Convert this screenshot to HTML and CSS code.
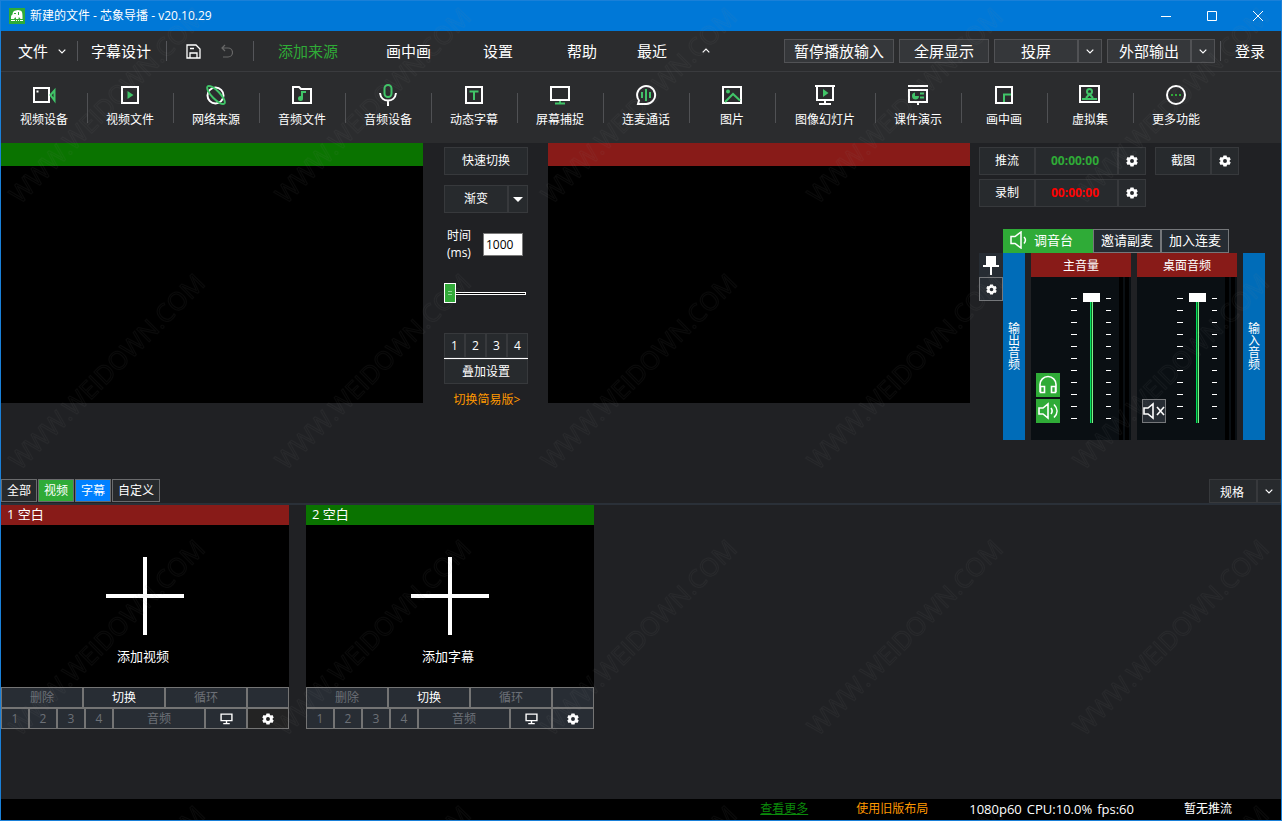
FILE: index.html
```html
<!DOCTYPE html>
<html lang="zh-CN">
<head>
<meta charset="utf-8">
<title>新建的文件 - 芯象导播</title>
<link rel="stylesheet" href="styles.css">
</head>
<body>
<svg class="defs" aria-hidden="true">
  <symbol id="cog" viewBox="0 0 14 14"><path fill="currentColor" fill-rule="evenodd" d="M5.200.500h3.600l.5 1.800 1.100.6 1.800-.5 1.500 2.900-1.300 1.200v1l1.300 1.200-1.500 2.900-1.800-.5-1.100.6-.5 1.800H5.200l-.5-1.800-1.100-.6-1.800.5L.3 8.700l1.300-1.200v-1L.3 5.300l1.500-2.900 1.800.5 1.100-.6zM7 4.700a2.300 2.300 0 1 0 0 4.600 2.300 2.300 0 0 0 0-4.600z"/></symbol>
  <symbol id="down" viewBox="0 0 8 5"><path d="M.7.7 4 4 7.300.7" fill="none" stroke="currentColor" stroke-width="1.200"/></symbol>
  <symbol id="screen" viewBox="0 0 12 12"><path d="M1 2h10v6H1zM6 8v3M3 10.700h6" fill="none" stroke="currentColor" stroke-width="1.300"/></symbol>
</svg>
<div class="window">
  <header class="titlebar">
    <svg class="logo" viewBox="0 0 16 16" aria-hidden="true"><rect width="16" height="16" fill="#2fab37"/><path fill="#fff" d="M2 9c0-1 .5-2 1.500-2.500C3.500 4 5 2.500 7 2.500c1-.7 3-.7 4 0 2 .5 2.500 2 2.500 6V11h-2l-1-1.500h-1V11H7V9.500H6L5 11H2z"/><path fill="#2fab37" d="M5 5h2v1H5zM9 4h1v3H9z"/><path stroke="#fff" d="M2 12.500h4M7 12.500h1M9 12.500h1M11 12.500h3"/></svg>
    <span class="title">新建的文件 - 芯象导播 - v20.10.29</span>
    <div class="winbtns">
      <button aria-label="最小化"><svg width="10" height="10"><path d="M0 5.500h10" stroke="#fff"/></svg></button>
      <button aria-label="最大化"><svg width="10" height="10"><path d="M.5.5h9v9h-9z" stroke="#fff" fill="none"/></svg></button>
      <button aria-label="关闭"><svg width="10" height="10"><path d="m0 0 10 10M10 0 0 10" stroke="#fff"/></svg></button>
    </div>
  </header>

  <nav class="menubar">
    <button class="menu file">文件<svg class="chev"><use href="#down"/></svg></button>
    <span class="vsep"></span>
    <button class="menu design">字幕设计</button>
    <span class="vsep"></span>
    <button class="menu save" aria-label="保存"><svg width="15" height="15"><path d="M1 1h9l4 4v9H1zM4 14V9h7v5M4 4.500h4" fill="none" stroke="#fff" stroke-width="1.300"/></svg></button>
    <button class="menu undo" aria-label="撤销"><svg width="12" height="14"><path d="M4 1 1 4l3 3M1 4h6a4.500 4.500 0 0 1 0 9H2" fill="none" stroke="#686868" stroke-width="1.200"/></svg></button>
    <span class="vsep"></span>
    <div class="tabs">
      <button class="tab on">添加来源</button>
      <button class="tab pip">画中画</button>
      <button class="tab">设置</button>
      <button class="tab help">帮助</button>
      <button class="tab recent">最近</button>
      <button class="tab fold" aria-label="收起"><svg class="chev up"><use href="#down"/></svg></button>
    </div>
    <div class="outputs">
      <button class="obtn w110">暂停播放输入</button>
      <button class="obtn w90">全屏显示</button>
      <div class="split"><button class="obtn w84">投屏</button><button class="obtn w24" aria-label="投屏选项"><svg class="chev"><use href="#down"/></svg></button></div>
      <div class="split"><button class="obtn w84">外部输出</button><button class="obtn w24" aria-label="输出选项"><svg class="chev"><use href="#down"/></svg></button></div>
      <span class="vsep"></span>
      <button class="menu login">登录</button>
    </div>
  </nav>

  <div class="toolbar">
    <button class="tool"><svg viewBox="0 0 24 22"><path class="w" d="M2 4h15v14H2z"/><path d="M4.500 6.500h2v2h-2z" fill="#fff"/><path class="g" d="m18.500 11 4-4.500v10z"/></svg>视频设备</button>
    <button class="tool"><svg viewBox="0 0 24 22"><path class="w" d="M4 3h16v16H4z"/><path class="gf" d="m9.500 7 6 4-6 4z"/></svg>视频文件</button>
    <button class="tool"><svg viewBox="0 0 24 22"><circle class="w" cx="11.500" cy="11.500" r="8"/><ellipse class="g" cx="12" cy="11" rx="12" ry="4" transform="rotate(46 12 11)"/></svg>网络来源</button>
    <button class="tool"><svg viewBox="0 0 24 22"><path class="w" d="M3 3h6l2 2h10v14H3z"/><path class="g" d="M12 14.500V8h4"/><circle class="gf" cx="10.500" cy="14.500" r="2.500"/></svg>音频文件</button>
    <button class="tool"><svg viewBox="0 0 24 22"><rect class="g" x="8.500" y="1" width="7" height="12" rx="3.500"/><path class="w" d="M4 9c1 10 15 10 16 0M12 16.500V22"/></svg>音频设备</button>
    <button class="tool"><svg viewBox="0 0 24 22"><path class="w" d="M4 3h16v16H4z"/><path class="g" d="M7.500 7.500h9M12 7.500V16"/></svg>动态字幕</button>
    <button class="tool"><svg viewBox="0 0 24 22"><path class="w" d="M3 3h18v13H3z"/><path class="g" d="M12 17v2.500M7 19.500h10"/></svg>屏幕捕捉</button>
    <button class="tool"><svg viewBox="0 0 24 22"><path class="w" d="M4 20h8a9 9 0 1 0-7-3.500z"/><path class="g" d="M8 8v6M12 5v12M16 8v6"/></svg>连麦通话</button>
    <button class="tool"><svg viewBox="0 0 24 22"><path class="w" d="M3 3h18v16H3z"/><path class="g" d="m5 18 8-8 7 6.500"/><circle class="gf" cx="8" cy="7.500" r="2"/></svg>图片</button>
    <button class="tool wide"><svg viewBox="0 0 24 22"><path class="w" d="M2 2h20M4 2v14h16V2M12 16v4M6 20h12"/><path class="gf" d="m10 5 5.500 4-5.500 4z"/></svg>图像幻灯片</button>
    <button class="tool"><svg viewBox="0 0 24 22"><path class="w" d="M2 2h20M3 6h18v12H3zM12 18v3"/><path class="gf" d="M9 8.500V12h4a3.500 3.500 0 1 1-4-3.500z"/><path class="g" d="M14 9.500h4M14 13.500h4"/></svg>课件演示</button>
    <button class="tool"><svg viewBox="0 0 24 22"><path class="w" d="M4 3h16v16H4z"/><path class="g" d="M12 18v-7.500h7"/></svg>画中画</button>
    <button class="tool"><svg viewBox="0 0 24 22"><path class="w" d="M2 2h19v16H2z"/><circle class="g" cx="11.500" cy="7.500" r="2.500"/><path class="g" d="m8 14 3.500-4 3.500 4M4 15h15"/></svg>虚拟集</button>
    <button class="tool"><svg viewBox="0 0 24 22"><circle class="w" cx="12" cy="11" r="9"/><path d="M7 10h2v2H7zM11 10h2v2h-2zM15 10h2v2h-2z" fill="#2fab37"/></svg>更多功能</button>
  </div>

  <main class="stage">
    <section class="monitor" aria-label="预览"><div class="bar green"></div><div class="screen"></div></section>
    <section class="mix">
      <button class="btn">快速切换</button>
      <div class="split fade"><button class="btn grow">渐变</button><button class="btn drop" aria-label="转场列表"><svg width="10" height="5"><path d="M0 0h10L5 5z" fill="#fff"/></svg></button></div>
      <div class="time"><label for="ms">时间<br>(ms)</label><input id="ms" type="text" value="1000"></div>
      <input class="fader" type="range" value="0" aria-label="转场进度">
      <div class="nums"><button class="btn">1</button><button class="btn">2</button><button class="btn">3</button><button class="btn">4</button></div>
      <button class="btn overlay">叠加设置</button>
      <a class="simple" href="#">切换简易版&gt;</a>
    </section>
    <section class="monitor" aria-label="输出"><div class="bar red"></div><div class="screen"></div></section>
    <aside class="side">
      <div class="recrow">
        <div class="split"><button class="btn w56">推流</button><output class="btn clock live">00:00:00</output><button class="btn w28" aria-label="推流设置"><svg class="cog"><use href="#cog"/></svg></button></div>
        <div class="split"><button class="btn w56">截图</button><button class="btn w28" aria-label="截图设置"><svg class="cog"><use href="#cog"/></svg></button></div>
      </div>
      <div class="recrow">
        <div class="split"><button class="btn w56">录制</button><output class="btn clock rec">00:00:00</output><button class="btn w28" aria-label="录制设置"><svg class="cog"><use href="#cog"/></svg></button></div>
      </div>
      <div class="mixer">
        <div class="mixtabs">
          <button class="console"><svg width="18" height="18"><path d="M1 5.500h4L11 1v16l-6-4.500H1zM14 6c2 2 2 4 0 6.500" fill="none" stroke="#fff" stroke-width="1.500"/></svg>调音台</button>
          <button class="mt">邀请副麦</button><button class="mt">加入连麦</button>
        </div>
        <div class="pins">
          <button class="pin" aria-label="固定"><svg width="16" height="19"><path d="M3 0h10v9h3v2H9v8H7v-8H0V9h3z" fill="#fff"/></svg></button>
          <button class="pin boxed" aria-label="设置"><svg class="cog small"><use href="#cog"/></svg></button>
        </div>
        <div class="channels">
          <div class="vlabel"><span>输出音频</span></div>
          <div class="strip">
            <div class="sname">主音量</div>
            <div class="sbody">
              <div class="sbtns">
                <button class="sb" aria-label="监听"><svg width="20" height="20"><path d="M2 17V9.500a8 8 0 0 1 16 0V17M2.500 11.500h4v6h-4zM13.500 11.500h4v6h-4z" fill="none" stroke="#fff" stroke-width="1.600"/></svg></button>
                <button class="sb" aria-label="静音"><svg width="20" height="18"><path d="M1 6h4l5-4v14l-5-4H1zM13 6c1.500 2 1.500 4 0 6M16 2.500c4 4 4 9 0 13" fill="none" stroke="#fff" stroke-width="1.600"/></svg></button>
              </div>
              <span class="ticks"></span><input class="vol" type="range" value="100" aria-label="主音量"><span class="ticks short"></span>
              <span class="meter"></span>
            </div>
          </div>
          <div class="strip">
            <div class="sname">桌面音频</div>
            <div class="sbody">
              <div class="sbtns">
                <button class="sb off" aria-label="取消静音"><svg width="22" height="18"><path d="M1 6h4l5-4v14l-5-4H1zM14 5l7 8M21 5l-7 8" fill="none" stroke="#fff" stroke-width="1.600"/></svg></button>
              </div>
              <span class="ticks"></span><input class="vol" type="range" value="100" aria-label="桌面音频"><span class="ticks short"></span>
              <span class="meter"></span>
            </div>
          </div>
          <div class="vlabel"><span>输入音频</span></div>
        </div>
      </div>
    </aside>
  </main>

  <div class="filter">
    <button class="cat">全部</button><button class="cat c-green">视频</button><button class="cat c-blue">字幕</button><button class="cat">自定义</button>
    <div class="split spec"><button class="btn w48">规格</button><button class="btn w24" aria-label="规格选项"><svg class="chev"><use href="#down"/></svg></button></div>
  </div>

  <section class="sources">
    <article class="card">
      <h2 class="chead red">1 空白</h2>
      <button class="add"><svg class="plus" viewBox="0 0 78 78"><path d="M37 0h4v78h-4zM0 37h78v4H0z" fill="#fff"/></svg><span class="addname">添加视频</span></button>
      <div class="r1"><button disabled>删除</button><button>切换</button><button disabled>循环</button><button aria-label="空"></button></div>
      <div class="r2"><button disabled>1</button><button disabled>2</button><button disabled>3</button><button disabled>4</button><button disabled>音频</button><button aria-label="投屏"><svg class="scr"><use href="#screen"/></svg></button><button class="set" aria-label="设置"><svg class="cog"><use href="#cog"/></svg></button></div>
    </article>
    <article class="card">
      <h2 class="chead green">2 空白</h2>
      <button class="add"><svg class="plus" viewBox="0 0 78 78"><path d="M37 0h4v78h-4zM0 37h78v4H0z" fill="#fff"/></svg><span class="addname">添加字幕</span></button>
      <div class="r1"><button disabled>删除</button><button>切换</button><button disabled>循环</button><button aria-label="空"></button></div>
      <div class="r2"><button disabled>1</button><button disabled>2</button><button disabled>3</button><button disabled>4</button><button disabled>音频</button><button aria-label="投屏"><svg class="scr"><use href="#screen"/></svg></button><button aria-label="设置"><svg class="cog"><use href="#cog"/></svg></button></div>
    </article>
  </section>

  <footer class="status">
    <a class="more" href="#">查看更多</a>
    <a class="old" href="#">使用旧版布局</a>
    <div class="stats"><span>1080p60</span><span>CPU:10.0%</span><span>fps:60</span></div>
    <span class="push">暂无推流</span>
  </footer>
</div>
<svg class="watermark" aria-hidden="true">
  <defs><pattern id="wm" x="0" y="-60" width="266" height="266" patternUnits="userSpaceOnUse"><text class="wmtext" transform="translate(20 265) rotate(-45)">WWW.WEIDOWN.COM</text></pattern></defs>
  <rect width="100%" height="100%" fill="url(#wm)"/>
</svg>
</body>
</html>
```

FILE: styles.css
```css
* { box-sizing: border-box; }
body {
  margin: 0;
  position: relative;
  background: #202124;
  color: #fff;
  font: 12px/16px "Open Sans", "Noto Sans CJK SC", sans-serif;
}
button, input, output { font: inherit; color: inherit; }
button { padding: 0; margin: 0; border: 0; background: none; white-space: nowrap; }
a { color: inherit; text-decoration: none; }
svg { display: block; flex: none; }
.defs { position: absolute; width: 0; height: 0; }
.window { display: flex; flex-direction: column; min-height: 100vh; border: 1px solid #1a80d8; }
.split { display: flex; }

.titlebar { display: flex; align-items: center; height: 30px; padding-left: 8px; background: #0078d7; }
.logo { width: 16px; height: 16px; }
.title { margin-left: 5px; }
.winbtns { display: flex; margin-left: auto; align-self: stretch; }
.winbtns button { width: 46px; display: grid; place-items: center; }

.menubar { display: flex; align-items: center; height: 41px; background: #2b2c2e; border-bottom: 1px solid #3a3b3e; font-size: 15px; line-height: 20px; }
.vsep { width: 1px; height: 20px; background: #55565a; flex: none; }
.chev { width: 8px; height: 5px; }
.up { transform: rotate(180deg); }
.menu { display: flex; align-items: center; }
.file { padding: 0 11px 0 17px; gap: 10px; }
.design { padding: 0 15px 0 13px; }
.save { padding: 0 10px 0 19px; }
.undo { padding: 0 20px 0 10px; }
.tabs { display: flex; align-self: stretch; margin-left: 13px; }
.tab { padding: 0 26px 2px; height: 42px; }
.tab.on { padding: 0 13px 1px 11px; color: #2fab37; border-bottom: 1px solid #2fab37; }
.tab.pip { margin-left: 9px; }
.tab.help { padding: 0 24px 2px 28px; }
.tab.recent { padding: 0 16px 2px; }
.tab.fold { padding: 0 19px 4px; }
.outputs { display: flex; align-items: center; gap: 5px; margin-left: auto; }
.obtn { display: grid; place-items: center; height: 24px; background: #35373a; border: 1px solid #515255; }
.w110 { width: 110px; }
.w90 { width: 90px; }
.w84 { width: 84px; }
.w56 { width: 56px; }
.w48 { width: 48px; }
.w28 { width: 28px; }
.w24 { width: 24px; }
.login { padding: 0 16px 0 9px; }

.toolbar { display: flex; height: 71px; background: #2b2c2e; }
.tool { display: flex; flex-direction: column; align-items: center; gap: 6px; min-width: 86px; padding: 12px 18px 0; }
.tool.wide { padding: 12px 20px 0; }
.tool + .tool { background: linear-gradient(#505154, #505154) 0 21px / 1px 30px no-repeat; }
.tool svg { width: 24px; height: 22px; }
.w { fill: none; stroke: #fff; stroke-width: 2; }
.g { fill: none; stroke: #41c468; stroke-width: 2; }
.gf { fill: #41c468; }

.stage { display: grid; grid-template-columns: 1fr 125px 1fr 311px; align-items: start; padding-bottom: 39px; }
.bar { height: 23px; }
.green { background: #0a7300; }
.red { background: #881b18; }
.screen { aspect-ratio: 16 / 9; background: #000; }
.btn { display: grid; place-items: center; height: 28px; background: #272a2d; border: 1px solid #37393c; }
.mix { display: flex; flex-direction: column; width: 84px; margin: 4px 0 0 21px; }
.fade { margin-top: 10px; }
.grow { flex: 1; }
.drop { width: 20px; }
.time { display: flex; align-items: center; justify-content: space-between; margin-top: 14px; padding: 0 5px 0 3px; line-height: 17px; }
.time input { width: 40px; height: 23px; padding: 0 2px; background: #fff; border: 1px solid #7a7a7a; color: #000; }
.fader { appearance: none; width: 84px; height: 20px; margin: 22px 0 30px; background: linear-gradient(#000, #000) 1px 10px / 80px 1px no-repeat, linear-gradient(#fff, #fff) 0 9px / 82px 3px no-repeat; }
.fader::-webkit-slider-thumb { appearance: none; width: 12px; height: 20px; border: 1px solid #fff; background: linear-gradient(#8fd894, #8fd894) 3px 7px / 4px 1px no-repeat, linear-gradient(#8fd894, #8fd894) 3px 10px / 4px 1px no-repeat, #2fab37; }
.nums { display: grid; grid-template-columns: repeat(4, 1fr); border-bottom: 1px solid #fff; }
.nums .btn, .overlay { height: 25px; }
.simple { margin: 8px 0 0 2px; text-align: center; color: #ff9800; }

.side { padding: 4px 0 0 9px; }
.recrow { display: flex; gap: 9px; margin-bottom: 4px; }
.clock { width: 83px; padding-right: 3px; font-weight: 700; }
.live { color: #2fab37; }
.rec { color: #f00; }
.cog { width: 12px; height: 12px; }
.cog.small { width: 11px; height: 11px; }
.mixer { display: grid; grid-template-columns: 24px 1fr; margin-top: 22px; }
.mixtabs { grid-column: 2; display: flex; height: 24px; font-size: 13px; }
.mixtabs button { padding-bottom: 2px; }
.console { display: flex; align-items: center; gap: 6px; width: 90px; padding-left: 7px; background: #2fab37; }
.mt { width: 68px; background: #262c33; border: 1px solid #75777a; }
.pins { grid-column: 1; }
.pin { display: grid; place-items: center; width: 24px; height: 24px; background: #262c33; }
.boxed { border: 1px solid #75777a; }
.channels { display: flex; gap: 6px; }
.vlabel { width: 22px; background: #006cb8; display: flex; align-items: center; justify-content: center; }
.vlabel span { width: 12px; line-height: 12px; text-align: center; }
.strip { width: 100px; background: #0a0f13; }
.sname { height: 24px; line-height: 25px; text-align: center; background: #881b18; }
.sbody { display: flex; height: 163px; padding: 16px 2px 17px 5px; }
.sbtns { display: flex; flex-direction: column; justify-content: flex-end; gap: 2px; width: 24px; margin-right: 11px; }
.sb { display: grid; place-items: center; width: 24px; height: 24px; background: #2fab37; }
.sb.off { background: #262c33; border: 1px solid #75777a; }
.ticks { width: 6px; height: 121px; margin: 5px 6px 0 0; background: repeating-linear-gradient(#fff 0 1px, transparent 1px 12px); }
.ticks.short { width: 5px; margin: 5px 8px 0 6px; }
.vol { appearance: none; writing-mode: vertical-lr; direction: rtl; width: 17px; height: 130px; margin: 0; background: linear-gradient(90deg, #00e060 1px, #086b25 1px 2px, #7ef08a 2px) 7px 0 / 3px 130px no-repeat; }
.vol::-webkit-slider-thumb { appearance: none; width: 17px; height: 9px; background: #fff; }
.meter { width: 10px; margin: -16px 0 -17px; background: linear-gradient(90deg, #000 4px, transparent 4px 6px, #000 6px 10px); }

.filter { display: flex; gap: 1px; height: 26px; border-bottom: 2px solid #2a3038; }
.cat { height: 23px; padding: 0 5px; background: #272a2d; border: 1px solid #6a6b6d; }
.c-green { background: #2fab37; }
.c-blue { background: #0080ff; }
.spec { margin-left: auto; }
.spec .btn { height: 24px; }
.spec .w48 { padding: 3px 2px 0 0; }

.sources { flex: 1; display: flex; flex-wrap: wrap; align-items: flex-start; gap: 17px; }
.card { width: 288px; }
.chead { margin: 0; padding: 0 6px 2px; font-size: 13px; line-height: 18px; font-weight: 400; }
.add { display: flex; flex-direction: column; align-items: center; justify-content: center; gap: 12px; width: 100%; aspect-ratio: 16 / 9; padding-top: 10px; background: #000; font-size: 13px; line-height: 18px; }
.addname { padding-right: 4px; }
.plus { width: 78px; height: 78px; }
.r1, .r2 { display: grid; height: 21px; }
.r1 { grid-template-columns: 82fr 82fr 82fr 42fr; }
.r2 { grid-template-columns: 28fr 28fr 28fr 28fr 92fr 42fr 42fr; }
.r1 button, .r2 button { display: grid; place-items: center; background: #282d34; border: 1px solid #747474; }
.r1 button:disabled, .r2 button:disabled { color: #6c7077; }
.r2 .set { background: #232323; }
.scr { width: 13px; height: 13px; }

.status { display: flex; align-items: center; justify-content: flex-end; height: 21px; padding: 0 49px 1px 0; background: #000; }
.more { margin-right: 48px; color: #0b8a0b; text-decoration: underline; }
.old { margin-right: 41px; color: #ff9800; }
.stats { display: flex; gap: 5px; margin-right: 50px; font-size: 13px; }

.watermark { position: absolute; inset: 0; width: 100%; height: 100%; pointer-events: none; }
.wmtext { font: 25px "Open Sans", sans-serif; fill: none; stroke: #808080; stroke-opacity: 0.08; stroke-width: 1; }
```
